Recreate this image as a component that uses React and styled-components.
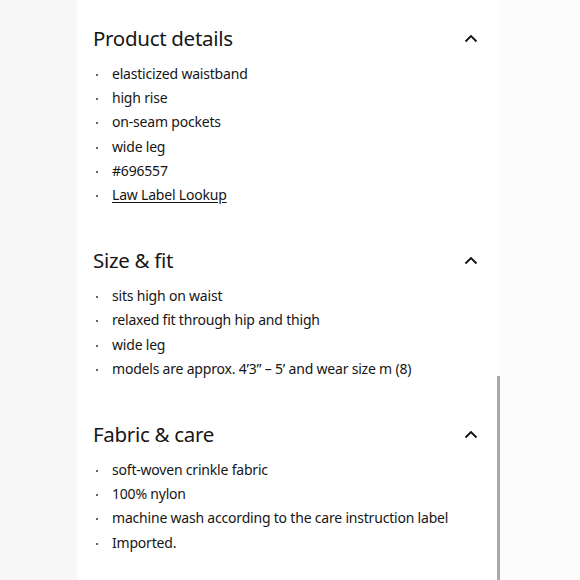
import styled, { createGlobalStyle } from 'styled-components';

const Global = createGlobalStyle`
  html, body { margin: 0; padding: 0; }
  body { font-family: 'Noto Sans', 'Open Sans', sans-serif; color: #161616; }
`;

const Page = styled.div`
  display: flex;
  height: 580px;
  overflow: hidden;
  background: #fcfcfc;
`;

const Gutter = styled.div`
  width: 77px;
  flex: none;
  background: #f7f7f7;
`;

const Panel = styled.div`
  position: relative;
  width: 423px;
  flex: none;
  background: #fff;
  padding: 24px 22px 0 16px;
  box-sizing: border-box;
`;

const Section = styled.section`
  margin-bottom: 39px;
`;

const Header = styled.div`
  display: flex;
  align-items: center;
  justify-content: space-between;
  height: 28px;
`;

const Title = styled.h2`
  margin: 0;
  font-size: 20.5px;
  font-weight: 400;
  letter-spacing: -0.3px;
  color: #161616;
`;

const List = styled.ul`
  list-style: none;
  margin: 10px 0 0;
  padding: 0;
`;

const Item = styled.li`
  position: relative;
  padding-left: 19px;
  font-size: 14px;
  line-height: 24.2px;
  letter-spacing: -0.2px;
  color: #161616;

  &::before {
    content: '';
    position: absolute;
    left: 3px;
    top: 12px;
    width: 2px;
    height: 2px;
    border-radius: 50%;
    background: #333;
  }
`;

const ItemLink = styled.a`
  color: inherit;
  text-decoration: underline;
  text-underline-offset: 2px;
`;

const Scrollbar = styled.div`
  position: absolute;
  right: 0;
  top: 376px;
  bottom: 0;
  width: 3px;
  background: #a9a9a9;
`;

const Chevron = () => (
  <svg width="14" height="9" viewBox="0 0 14 9" fill="none">
    <path d="M1.5 7.5 L7 2 L12.5 7.5" stroke="#111" strokeWidth="1.8" />
  </svg>
);

const sections = [
  {
    title: 'Product details',
    items: ['elasticized waistband', 'high rise', 'on-seam pockets', 'wide leg', '#696557', { link: 'Law Label Lookup' }],
  },
  {
    title: 'Size & fit',
    items: ['sits high on waist', 'relaxed fit through hip and thigh', 'wide leg', 'models are approx. 4\u20193\u201D \u2013 5\u2019 and wear size m (8)'],
  },
  {
    title: 'Fabric & care',
    items: ['soft-woven crinkle fabric', '100% nylon', 'machine wash according to the care instruction label', 'Imported.'],
  },
];

export default function App() {
  return (
    <>
      <Global />
      <Page>
        <Gutter />
        <Panel>
          {sections.map((s) => (
            <Section key={s.title}>
              <Header>
                <Title>{s.title}</Title>
                <Chevron />
              </Header>
              <List>
                {s.items.map((it, i) => (
                  <Item key={i}>
                    {typeof it === 'string' ? it : <ItemLink href="#">{it.link}</ItemLink>}
                  </Item>
                ))}
              </List>
            </Section>
          ))}
          <Scrollbar />
        </Panel>
      </Page>
    </>
  );
}
